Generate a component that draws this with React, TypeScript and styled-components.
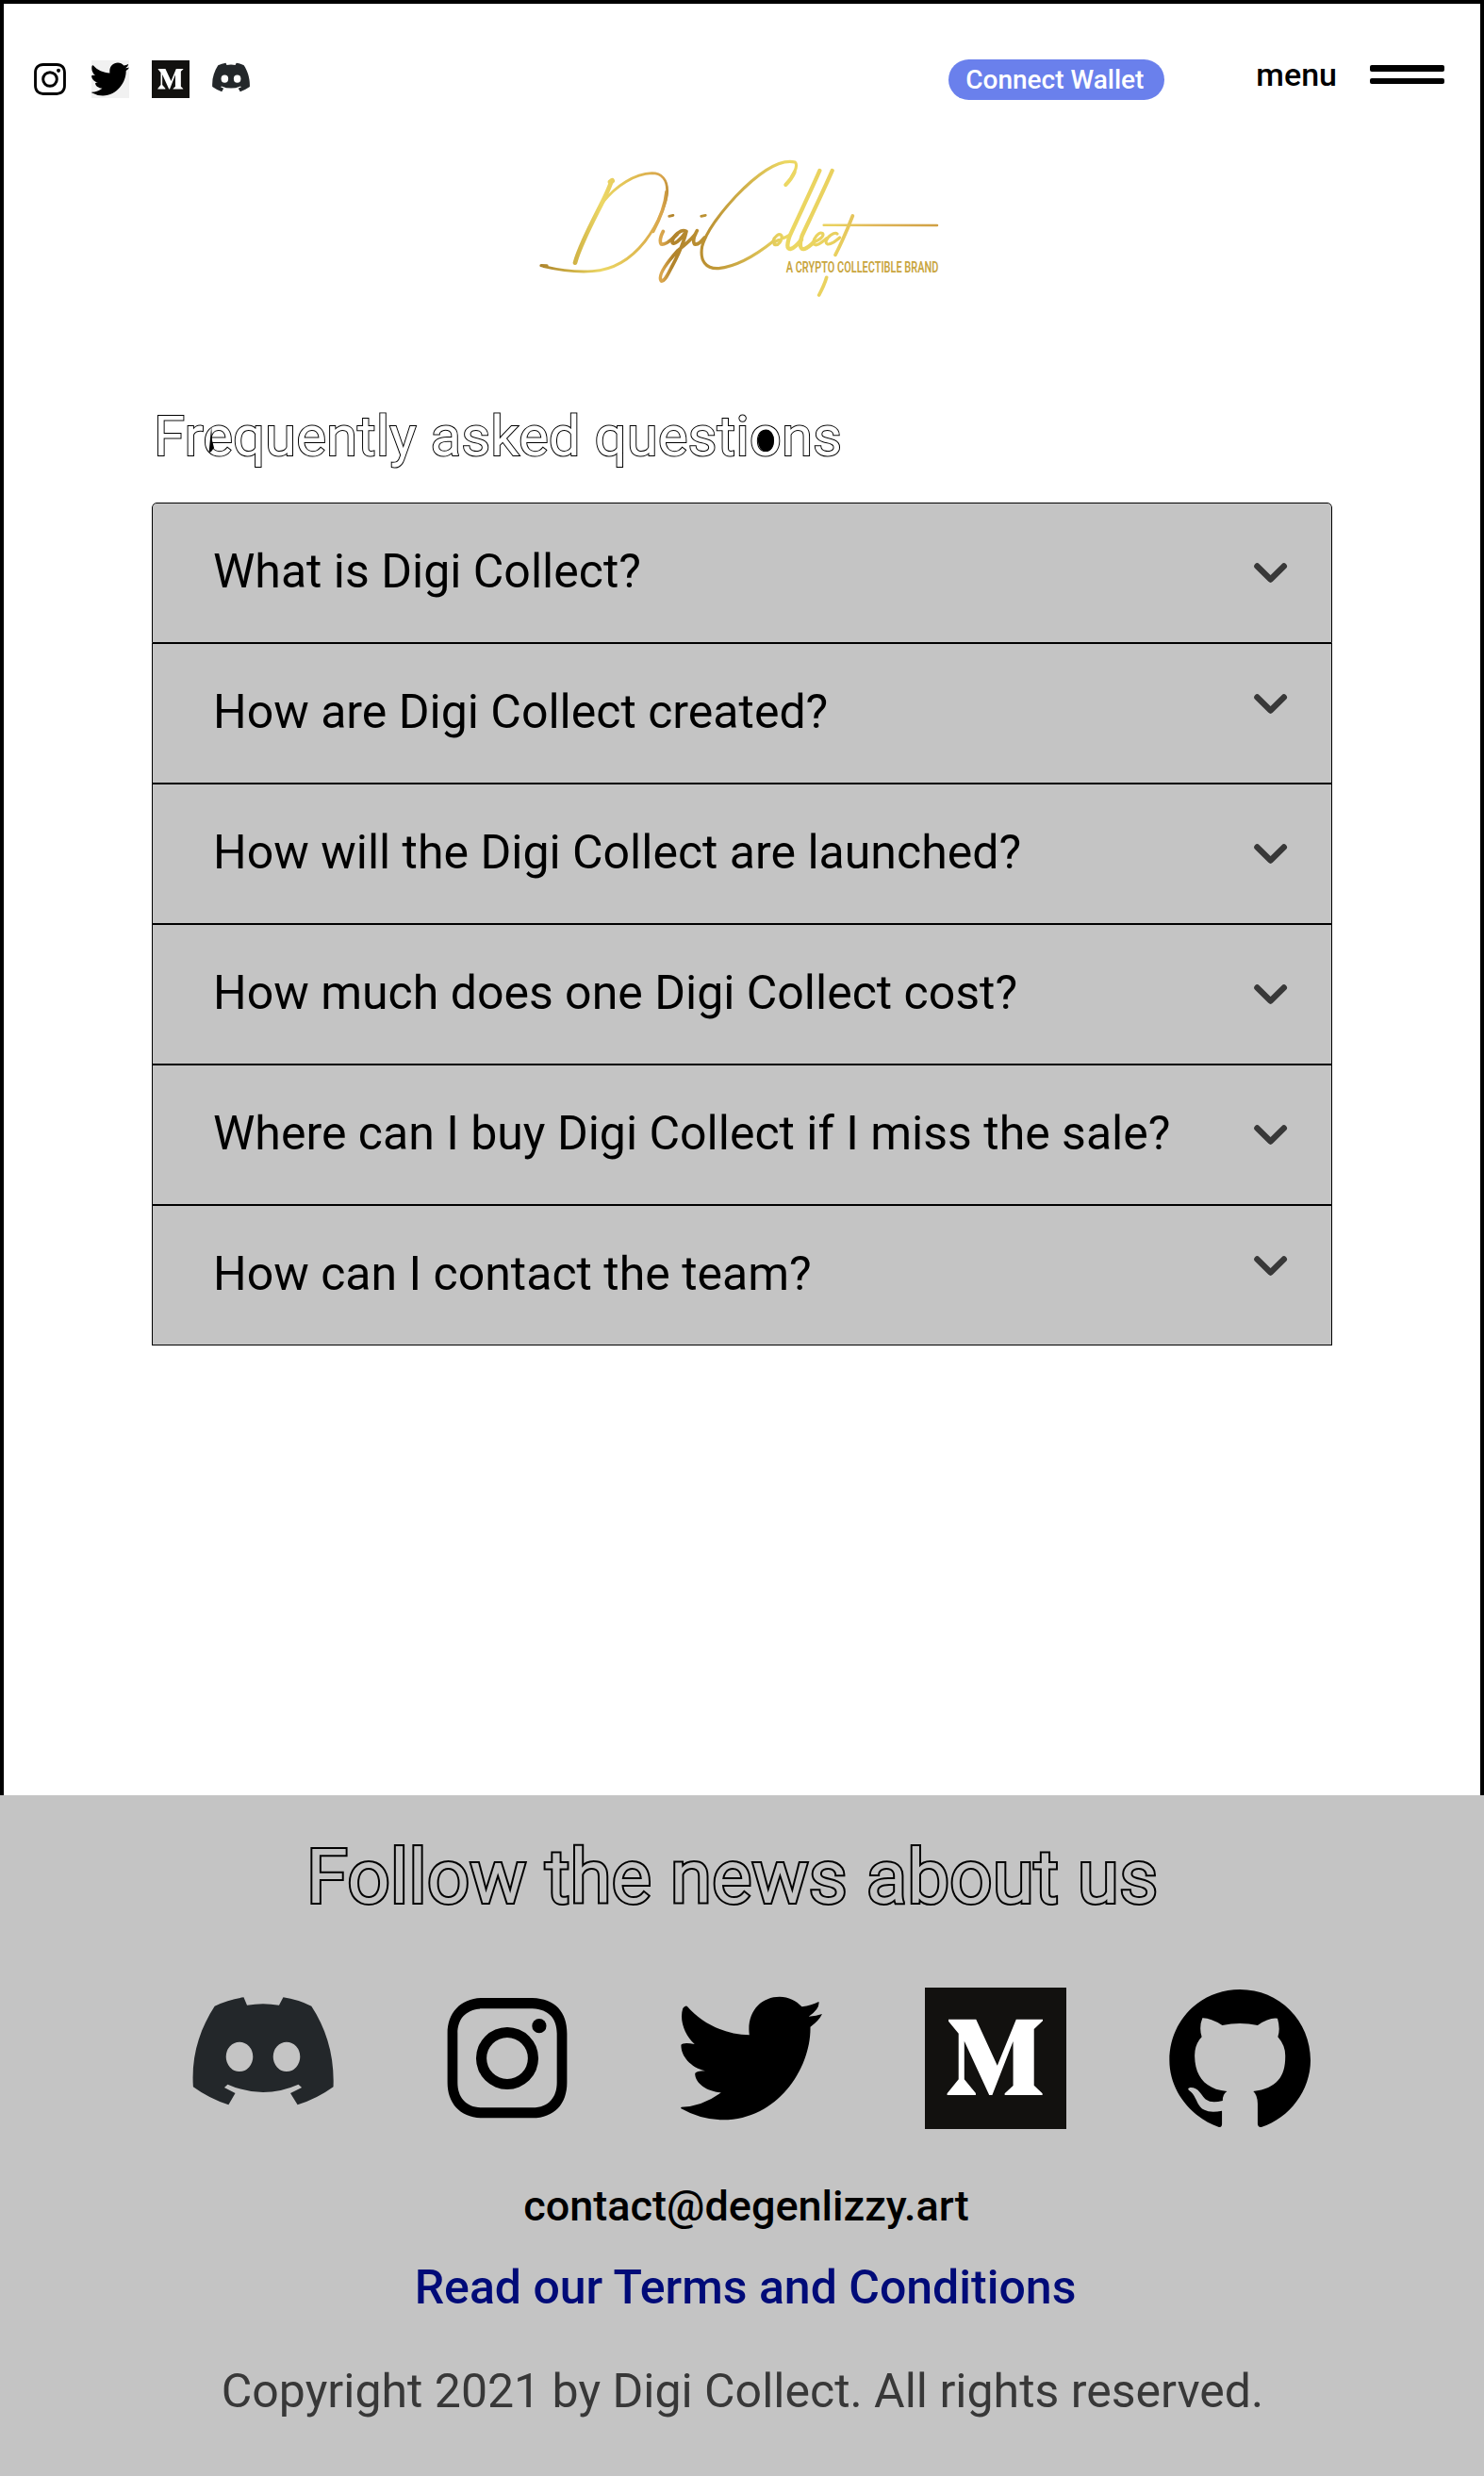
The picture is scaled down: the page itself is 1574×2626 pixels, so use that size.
import React from "react";
import styled, { createGlobalStyle } from "styled-components";

const GlobalStyle = createGlobalStyle`
  * { box-sizing: border-box; }
  body { margin: 0; background: #fff; font-family: Roboto, "Liberation Sans", sans-serif; color: #000; }
  h1, h2, p { margin: 0; font-weight: 400; }
  svg { display: block; }
`;

const Page = styled.div`
  width: 1574px;
  height: 2626px;
  display: flex;
  flex-direction: column;
  overflow: hidden;
`;

const Main = styled.main`
  height: 1904px;
  flex: none;
  border: solid #000;
  border-width: 4px 4px 0;
  display: flex;
  flex-direction: column;
`;

const Header = styled.header`
  height: 146px;
  padding: 55px 38px 0 29px;
  display: flex;
  align-items: flex-start;
`;

const SocialLinks = styled.nav<{ $gap: number }>`
  display: flex;
  gap: ${(p) => p.$gap}px;
`;

const HeaderSocial = styled.div`
  padding-top: 5px;
  margin-right: auto;
`;

const IconLink = styled.a<{ $size: number; $tint?: string }>`
  width: ${(p) => p.$size}px;
  height: ${(p) => p.$size}px;
  background: ${(p) => p.$tint || "transparent"};
  color: inherit;
`;

const WalletButton = styled.button`
  width: 229px;
  height: 43px;
  margin: 4px 97px 0 0;
  padding: 1px 4px 0 0;
  border: 0;
  border-radius: 21.5px;
  background: #6a80ec;
  color: #fff;
  font: 500 28px/42px Roboto, "Liberation Sans", sans-serif;
  white-space: nowrap;
`;

const MenuButton = styled.button`
  display: flex;
  gap: 35px;
  padding: 0;
  border: 0;
  background: none;
  color: #000;
  font: 500 34px/40px Roboto, "Liberation Sans", sans-serif;
`;

const MenuBars = styled.span`
  width: 79px;
  margin-top: 10px;
  display: flex;
  flex-direction: column;
  gap: 7px;
`;

const MenuBar = styled.span`
  height: 6.5px;
  border-radius: 2px;
  background: #000;
`;

const Brand = styled.div`
  height: 180px;
  padding-left: 556px;
`;

const FaqSection = styled.section`
  width: 1252px;
  margin: 97px 0 0 157px;
`;

const FaqTitle = styled.h1`
  position: relative;
  height: 106px;
  padding-left: 2px;
  font-size: 60px;
  line-height: 72px;
  white-space: nowrap;
  color: #fff;
  -webkit-text-stroke: 2px #000;
  paint-order: stroke fill;
`;

const TitleInk = styled.svg`
  position: absolute;
  left: 0;
  top: -1px;
`;

const FaqList = styled.div`
  border-radius: 5px 5px 0 0;
  overflow: hidden;
`;

const FaqItem = styled.div`
  height: 149px;
  border: 1px solid #000;
  background: #c4c4c4;
  padding: 42px 46px 0 64px;
  display: flex;
  justify-content: space-between;
  font-size: 50px;
  line-height: 60px;

  &:first-child {
    border-radius: 5px 5px 0 0;
  }
`;

const ChevronBox = styled.span<{ $raised: boolean }>`
  margin-top: ${(p) => (p.$raised ? 11 : 21)}px;
`;

const Footer = styled.footer`
  height: 722px;
  flex: none;
  background: #c4c4c4;
  display: flex;
  flex-direction: column;
  align-items: center;
  white-space: nowrap;
`;

const FooterTitle = styled.h2`
  margin: 39px 21px 0 0;
  font-size: 80px;
  line-height: 96px;
  color: #c4c4c4;
  -webkit-text-stroke: 4px #000;
  paint-order: stroke fill;
`;

const FooterSocial = styled.div`
  margin: 69px 0 0 20px;
`;

const Contact = styled.p`
  margin: 55px 0 0 9px;
  font-size: 45px;
  font-weight: 500;
  line-height: 54px;
`;

const Terms = styled.a`
  margin: 29px 0 0 7px;
  font-size: 50px;
  font-weight: 500;
  line-height: 60px;
  color: #000b78;
`;

const Copyright = styled.p`
  margin: 50px 0 0 1px;
  font-size: 50px;
  line-height: 60px;
  color: #383838;
`;

type IconProps = { size: number };

const DiscordIcon = ({ size }: IconProps) => (
  <svg width={size} height={size} viewBox="54 84 336 450" preserveAspectRatio="none">
    <path
      fill="#23272a"
      fillRule="evenodd"
      d="M176 115L184 140Q222 131 260 140L270 115Q305 122 337 143C372 215 392 300 389 400Q350 438 304 457L287 420L314 402L306 392Q222 442 138 392L130 402L156 420L140 457Q95 438 56 400C51 300 72 215 107 143Q140 122 176 115ZM134 304A32 47 0 1 0 198 304A32 47 0 1 0 134 304ZM246 304A32 47 0 1 0 310 304A32 47 0 1 0 246 304Z"
    />
  </svg>
);

const InstagramIcon = ({ size }: IconProps) => (
  <svg width={size} height={size} viewBox="634 84 336 450" preserveAspectRatio="none">
    <path
      fillRule="evenodd"
      d="M742 117H862C916 119 944 162 944 230V386C944 454 914 498 862 499H742C690 497 660 452 660 386V230C660 162 692 119 742 117ZM742 151C702 153 684 185 684 230V386C684 432 703 465 742 466H862C901 465 920 432 920 386V230C920 185 902 153 862 151Z"
    />
    <path
      fillRule="evenodd"
      d="M728 309A74 99 0 1 0 876 309A74 99 0 1 0 728 309ZM753 309A49 66 0 1 0 851 309A49 66 0 1 0 753 309Z"
    />
    <ellipse cx="878" cy="206" rx="17" ry="23" />
  </svg>
);

const TwitterIcon = ({ size }: IconProps) => (
  <svg width={size} height={size} viewBox="1214 84 336 450" preserveAspectRatio="none">
    <path d="M1229 143C1266 200 1320 233 1377 235C1370 160 1405 113 1449 113C1470 113 1489 126 1502 145Q1525 141 1542 129Q1545 152 1518 176Q1537 174 1550 168Q1542 190 1522 209C1524 340 1445 505 1315 505Q1262 505 1215 469Q1213 466 1216 464Q1265 462 1310 418C1278 415 1248 390 1248 357Q1250 350 1272 349C1236 337 1214 300 1215 266Q1220 257 1247 264C1224 235 1210 190 1219 150Q1224 140 1229 143Z" />
  </svg>
);

const MediumIcon = ({ size }: IconProps) => (
  <svg width={size} height={size} viewBox="283 84 420 450" preserveAspectRatio="none">
    <rect x="283" y="84" width="420" height="450" fill="#12110f" />
    <path
      fill="#fff"
      d="M353 185H435L498 332L554 185H633V190L607 216V395L632 421V426H520V421L545 396V255L483 426H474L400 254V376L434 420V426H349V421L383 376V230L353 191Z"
    />
  </svg>
);

const GithubIcon = ({ size }: IconProps) => (
  <svg width={size} height={size} viewBox="1008 84 420 450" preserveAspectRatio="none">
    <path d="M1156 528C1070 495 1009 410 1009 316C1009 190 1100 90 1218 90C1336 90 1428 190 1428 316C1428 410 1366 500 1282 528Q1272 528 1271 518V453Q1270 425 1258 414C1330 405 1354 365 1353 300Q1353 268 1331 241Q1339 215 1330 182Q1305 178 1271 204Q1218 192 1166 204Q1130 180 1107 181Q1096 210 1105 241Q1083 265 1084 303C1085 360 1110 407 1180 414Q1167 423 1167 444Q1133 453 1119 441C1105 432 1098 400 1070 402Q1060 405 1068 412C1090 427 1090 465 1113 473Q1130 483 1165 476V518Q1165 528 1156 528Z" />
  </svg>
);

const Chevron = () => (
  <svg width="36" height="22" viewBox="0 0 36 22" fill="none" stroke="#383838" strokeWidth="6.4" strokeLinecap="round" strokeLinejoin="round">
    <path d="M3.4 3.4L17.6 17.6L31.8 3.4" />
  </svg>
);

const Logo = () => (
  <svg width="450" height="180" viewBox="0 0 1350 540" fill="none" overflow="visible">
    <defs>
      <linearGradient id="gold" gradientUnits="userSpaceOnUse" x1="30" y1="0" x2="1310" y2="0">
        <stop offset="0" stopColor="#a9802a" />
        <stop offset="0.09" stopColor="#cfb144" />
        <stop offset="0.16" stopColor="#ecd765" />
        <stop offset="0.24" stopColor="#e0bd52" />
        <stop offset="0.31" stopColor="#d9a54c" />
        <stop offset="0.335" stopColor="#b1832b" />
        <stop offset="0.42" stopColor="#bc9233" />
        <stop offset="0.5" stopColor="#cdab46" />
        <stop offset="0.62" stopColor="#ecd863" />
        <stop offset="0.74" stopColor="#e9d05e" />
        <stop offset="0.84" stopColor="#dfb658" />
        <stop offset="1" stopColor="#cf9f43" />
      </linearGradient>
    </defs>
    <g stroke="url(#gold)" strokeLinecap="round" strokeLinejoin="round">
      <path strokeWidth="14" d="M150 386C162 340 195 275 222 222C240 187 258 150 266 125" />
      <path strokeWidth="16" d="M262 129L268 125" />
      <path strokeWidth="10" d="M42 395L60 396" />
      <path strokeWidth="8.5" d="M50 398C110 412 160 416 205 413C280 408 335 365 372 318C420 256 442 190 443 158C443 122 425 101 394 101C340 103 280 140 238 194" />
      <path strokeWidth="11" d="M398 286C420 245 437 200 441 160" />
      <path strokeWidth="11" d="M430 286C422 302 418 318 424 327C438 330 458 312 474 296" />
      <path strokeWidth="8" d="M449 238L462 235M551 238L565 235" />
      <path strokeWidth="11" d="M503 286C488 276 460 302 459 320C460 334 486 314 504 286C496 320 478 362 456 402C444 426 434 446 424 444C412 428 440 388 478 346C496 332 514 318 532 296" />
      <path strokeWidth="11" d="M538 284C528 302 524 318 530 327C542 330 552 318 562 306" />
      <path strokeWidth="9.5" d="M820 138C842 114 862 78 850 66C790 52 714 120 662 174C612 228 566 290 554 334C546 380 566 406 606 404C664 398 730 358 780 318" />
      <path strokeWidth="12" d="M820 138C832 126 842 112 848 98" />
      <path strokeWidth="9.5" d="M780 318C784 302 800 290 807 300C810 314 796 334 784 328C780 322 790 316 806 310C818 306 826 302 832 298" />
      <path strokeWidth="13" d="M928 93C908 140 864 232 834 298C824 324 822 344 836 342C848 338 860 326 870 312" />
      <path strokeWidth="13" d="M968 93C948 140 904 232 872 300C864 326 864 346 880 342C892 338 900 330 908 322" />
      <path strokeWidth="9.5" d="M908 322C930 312 944 300 937 292C924 286 908 310 908 324C914 338 934 322 950 308" />
      <path strokeWidth="9.5" d="M984 294C976 286 950 304 948 320C950 336 974 322 992 306" />
      <path strokeWidth="11" d="M1033 237C1018 276 998 322 978 361M950 433C944 454 934 474 926 489" />
      <path strokeWidth="7.5" d="M941 266L1302 267" />
    </g>
    <text
      x="821"
      y="416"
      fontFamily="Roboto, 'Liberation Sans', sans-serif"
      fontWeight="600"
      fontSize="48"
      textLength="485"
      lengthAdjust="spacingAndGlyphs"
      fill="#c9a640"
    >
      A CRYPTO COLLECTIBLE BRAND
    </text>
  </svg>
);

const questions = [
  { text: "What is Digi Collect?", raised: false },
  { text: "How are Digi Collect created?", raised: true },
  { text: "How will the Digi Collect are launched?", raised: false },
  { text: "How much does one Digi Collect cost?", raised: false },
  { text: "Where can I buy Digi Collect if I miss the sale?", raised: false },
  { text: "How can I contact the team?", raised: true },
];

const headerLinks = [
  { name: "Instagram", Icon: InstagramIcon },
  { name: "Twitter", Icon: TwitterIcon, tint: "#f1f1f1" },
  { name: "Medium", Icon: MediumIcon },
  { name: "Discord", Icon: DiscordIcon },
];

const footerLinks = [
  { name: "Discord", Icon: DiscordIcon },
  { name: "Instagram", Icon: InstagramIcon },
  { name: "Twitter", Icon: TwitterIcon },
  { name: "Medium", Icon: MediumIcon },
  { name: "GitHub", Icon: GithubIcon },
];

export default function App() {
  return (
    <Page>
      <GlobalStyle />
      <Main>
        <Header>
          <HeaderSocial>
            <SocialLinks $gap={24}>
              {headerLinks.map(({ name, Icon, tint }) => (
                <IconLink key={name} aria-label={name} $size={40} $tint={tint}>
                  <Icon size={40} />
                </IconLink>
              ))}
            </SocialLinks>
          </HeaderSocial>
          <WalletButton>Connect Wallet</WalletButton>
          <MenuButton>
            menu
            <MenuBars>
              <MenuBar />
              <MenuBar />
            </MenuBars>
          </MenuButton>
        </Header>
        <Brand>
          <Logo />
        </Brand>
        <FaqSection>
          <FaqTitle>
            Frequently asked questions
            <TitleInk width="740" height="72" viewBox="0 0 740 72">
              <ellipse cx="651.4" cy="41.2" rx="8.6" ry="11.8" />
              <path d="M63.2 26L64 41L66 49L63 53L60.6 54Z" />
            </TitleInk>
          </FaqTitle>
          <FaqList>
            {questions.map(({ text, raised }) => (
              <FaqItem key={text}>
                {text}
                <ChevronBox $raised={raised}>
                  <Chevron />
                </ChevronBox>
              </FaqItem>
            ))}
          </FaqList>
        </FaqSection>
      </Main>
      <Footer>
        <FooterTitle>Follow the news about us</FooterTitle>
        <FooterSocial>
          <SocialLinks $gap={109}>
            {footerLinks.map(({ name, Icon }) => (
              <IconLink key={name} aria-label={name} $size={150}>
                <Icon size={150} />
              </IconLink>
            ))}
          </SocialLinks>
        </FooterSocial>
        <Contact>contact@degenlizzy.art</Contact>
        <Terms>Read our Terms and Conditions</Terms>
        <Copyright>Copyright 2021 by Digi Collect. All rights reserved.</Copyright>
      </Footer>
    </Page>
  );
}
